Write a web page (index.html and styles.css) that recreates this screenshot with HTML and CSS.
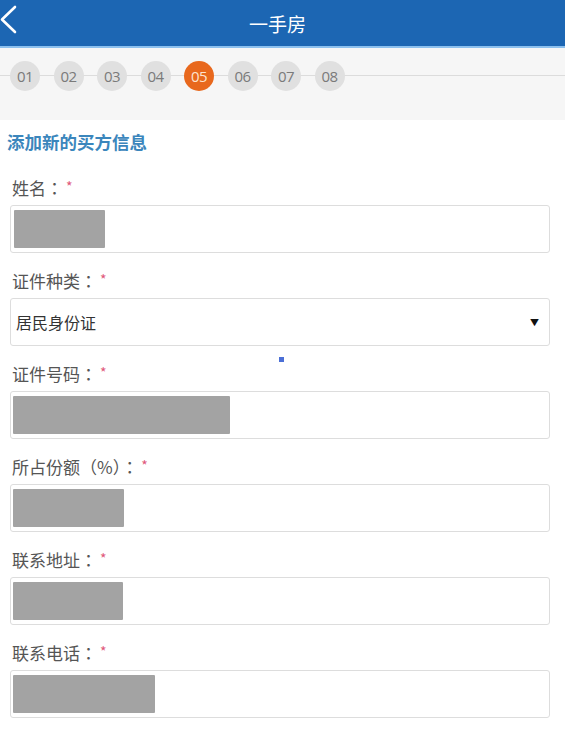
FILE: index.html
```html
<!DOCTYPE html>
<html lang="zh-CN">
<head>
<meta charset="utf-8">
<title>一手房</title>
<link rel="stylesheet" href="styles.css">
</head>
<body>
<div class="page">
  <header class="topbar">
    <span class="back">
      <svg width="18" height="30" viewBox="0 0 18 30"><polyline points="15,3 2,15.5 15,28" fill="none" stroke="#ffffff" stroke-width="2.6" stroke-linecap="round" stroke-linejoin="round"/></svg>
    </span>
    <h1 class="title">一手房</h1>
  </header>
  <div class="steps">
    <div class="steps-line"></div>
    <ol class="step-list">
      <li class="step">01</li>
      <li class="step">02</li>
      <li class="step">03</li>
      <li class="step">04</li>
      <li class="step active">05</li>
      <li class="step">06</li>
      <li class="step">07</li>
      <li class="step">08</li>
    </ol>
  </div>
  <h2 class="section-title">添加新的买方信息</h2>
  <form class="form">
    <div class="field">
      <label class="label">姓名<span class="colon" lang="ja">：</span><span class="req">*</span></label>
      <div class="input"><span class="mask" style="width:91px"></span></div>
    </div>
    <div class="field">
      <label class="label">证件种类<span class="colon" lang="ja">：</span><span class="req">*</span></label>
      <div class="input select"><span class="select-text">居民身份证</span><span class="caret">▼</span></div>
    </div>
    <div class="field">
      <label class="label">证件号码<span class="colon" lang="ja">：</span><span class="req">*</span></label>
      <div class="input"><span class="mask flush" style="width:217px"></span></div>
    </div>
    <div class="field">
      <label class="label">所占份额<span class="colon" lang="ja">（%）：</span><span class="req">*</span></label>
      <div class="input"><span class="mask flush" style="width:111px"></span></div>
    </div>
    <div class="field">
      <label class="label">联系地址<span class="colon" lang="ja">：</span><span class="req">*</span></label>
      <div class="input"><span class="mask flush" style="width:110px"></span></div>
    </div>
    <div class="field">
      <label class="label">联系电话<span class="colon" lang="ja">：</span><span class="req">*</span></label>
      <div class="input"><span class="mask flush" style="width:142px"></span></div>
    </div>
  </form>
  <span class="dot"></span>
</div>
</body>
</html>
```

FILE: styles.css
```css
html, body {
  margin: 0;
  padding: 0;
  background: #ffffff;
}
body {
  font-family: "Noto Sans CJK SC", "Noto Sans", sans-serif;
  color: #555555;
}
.page {
  position: relative;
  width: 565px;
  min-height: 729px;
  overflow: hidden;
}
.topbar {
  height: 46px;
  background: #1c66b3;
  border-bottom: 2px solid #8cc0ee;
  display: flex;
  align-items: center;
  justify-content: center;
  position: relative;
}
.back {
  position: absolute;
  left: 0;
  top: 4px;
  width: 18px;
  height: 30px;
}
.back svg { display: block; }
.title {
  margin: 0 10px 0 0;
  font-size: 19px;
  font-weight: normal;
  color: #ffffff;
}
.steps {
  position: relative;
  height: 72px;
  background: #f6f6f6;
  display: flex;
  align-items: flex-start;
}
.steps-line {
  position: absolute;
  left: 0;
  right: 0;
  top: 27px;
  height: 1px;
  background: #dcdcdc;
}
.step-list {
  position: relative;
  list-style: none;
  margin: 13px 0 0 10px;
  padding: 0;
  display: flex;
  gap: 13.5px;
}
.step {
  width: 30px;
  height: 30px;
  border-radius: 50%;
  background: #e0e0e0;
  color: #7a7a7a;
  font-family: "Open Sans", "Liberation Sans", sans-serif;
  font-size: 15px;
  line-height: 30px;
  text-align: center;
  letter-spacing: -0.5px;
}
.step.active {
  background: #e8681d;
  color: #fde3cf;
}
.section-title {
  margin: 0;
  padding: 10px 0 0 7px;
  height: 44px;
  box-sizing: border-box;
  font-size: 17.5px;
  line-height: 24px;
  font-weight: bold;
  color: #3b86bc;
}
.form {
  display: flex;
  flex-direction: column;
  gap: 15px;
  padding: 11px 15px 0 10px;
}
.field {
  display: flex;
  flex-direction: column;
  gap: 4px;
}
.label {
  height: 26px;
  line-height: 26px;
  padding-left: 2px;
  font-size: 17px;
  color: #555555;
}
.colon {
  font-family: "Noto Sans CJK JP", "Noto Sans CJK SC", sans-serif;
}
.req {
  color: #e0577a;
  font-size: 14px;
  vertical-align: top;
  line-height: 22px;
  margin-left: 3px;
}
.input {
  height: 48px;
  box-sizing: border-box;
  border: 1px solid #dddddd;
  border-radius: 3px;
  background: #ffffff;
  display: flex;
  align-items: stretch;
  padding: 4px 3px;
}
.mask {
  display: block;
  background: #a3a3a3;
  border-radius: 1px;
}
.mask.flush {
  margin-left: -1px;
}
.select {
  align-items: center;
  justify-content: space-between;
  padding: 0 10px 0 5px;
}
.select-text {
  font-size: 16px;
  color: #333333;
}
.caret {
  font-size: 9px;
  color: #111111;
}
.dot {
  position: absolute;
  left: 279px;
  top: 357px;
  width: 5px;
  height: 5px;
  background: #4b6fd6;
}
```
